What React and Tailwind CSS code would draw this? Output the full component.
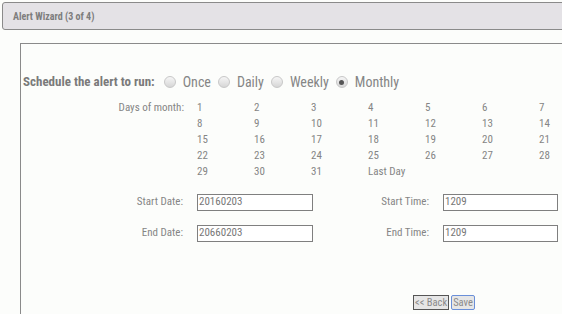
import React from 'react';

const font = "font-['Roboto_Condensed','Liberation_Sans_Narrow','Roboto',sans-serif]";

const days = [
  ['1', '2', '3', '4', '5', '6', '7'],
  ['8', '9', '10', '11', '12', '13', '14'],
  ['15', '16', '17', '18', '19', '20', '21'],
  ['22', '23', '24', '25', '26', '27', '28'],
  ['29', '30', '31', 'Last Day'],
];

function Radio({ label, checked }) {
  return (
    <span className="flex items-center">
      <span className="w-[12px] h-[12px] rounded-full border border-[#c8c8c8] bg-gradient-to-b from-[#f6f6f6] to-[#d6d6d6] flex items-center justify-center">
        {checked && <span className="w-[5px] h-[5px] rounded-full bg-[#555]"></span>}
      </span>
      <span className="ml-[7px] text-[14px] text-[#858585]">{label}</span>
    </span>
  );
}

function Field({ value, width }) {
  return (
    <div className={`${width} h-[17px] border border-[#7f7f7f] bg-white flex items-center pl-[1px] text-[11px] text-[#777]`}>
      {value}
    </div>
  );
}

export default function App() {
  return (
    <div className={`w-[562px] h-[314px] overflow-hidden bg-[#fcfdfb] ${font}`}>
      {/* wizard header */}
      <div className="mt-[2px] ml-[2px] w-[580px] h-[28px] border border-[#8a8a8a] rounded-l-[3px] bg-[#e4e2e6] flex items-center pl-[10px] text-[10px] font-bold text-[#7d7d7d]">
        Alert Wizard (3 of 4)
      </div>

      <div className="mt-[13px] ml-[20px] w-[600px] h-[300px] border-t border-l border-[#8a8a8a]">
        <div className="mt-[29px] ml-[2px] h-[18px] flex items-center">
          <span className="text-[13px] font-bold text-[#7a7a7a]">Schedule the alert to run:</span>
          <span className="ml-[9px] flex items-center gap-[7px]">
            <Radio label="Once" />
            <Radio label="Daily" />
            <Radio label="Weekly" />
            <Radio label="Monthly" checked />
          </span>
        </div>

        <div className="mt-[9px] flex text-[11px] text-[#858585]">
          <div className="w-[163px] text-right h-[16px] leading-[16px]">Days of month:</div>
          <div className="ml-[13px] grid grid-cols-[57px_57px_57px_57px_57px_57px_57px]">
            {days.flat().map((d, i) => (
              <div key={i} className="h-[16px] leading-[16px]">{d}</div>
            ))}
          </div>
        </div>

        <div className="mt-[14px] flex items-center text-[11px] text-[#858585]">
          <div className="w-[162px] text-right">Start Date:</div>
          <div className="ml-[14px]"><Field value="20160203" width="w-[116px]" /></div>
          <div className="w-[116px] text-right">Start Time:</div>
          <div className="ml-[14px]"><Field value="1209" width="w-[115px]" /></div>
        </div>

        <div className="mt-[14px] flex items-center text-[11px] text-[#858585]">
          <div className="w-[162px] text-right">End Date:</div>
          <div className="ml-[14px]"><Field value="20660203" width="w-[116px]" /></div>
          <div className="w-[116px] text-right">End Time:</div>
          <div className="ml-[14px]"><Field value="1209" width="w-[115px]" /></div>
        </div>

        <div className="mt-[53px] ml-[392px] flex gap-[2px] text-[10.5px] text-[#8a8a8a]">
          <button className="h-[15px] px-[1px] leading-[13px] border border-[#555] bg-[#e6e6e6]">&lt;&lt; Back</button>
          <button className="h-[15px] px-[1px] leading-[13px] border border-[#6a8fd8] rounded-[2px] bg-[#e6e6e6]">Save</button>
        </div>
      </div>
    </div>
  );
}
